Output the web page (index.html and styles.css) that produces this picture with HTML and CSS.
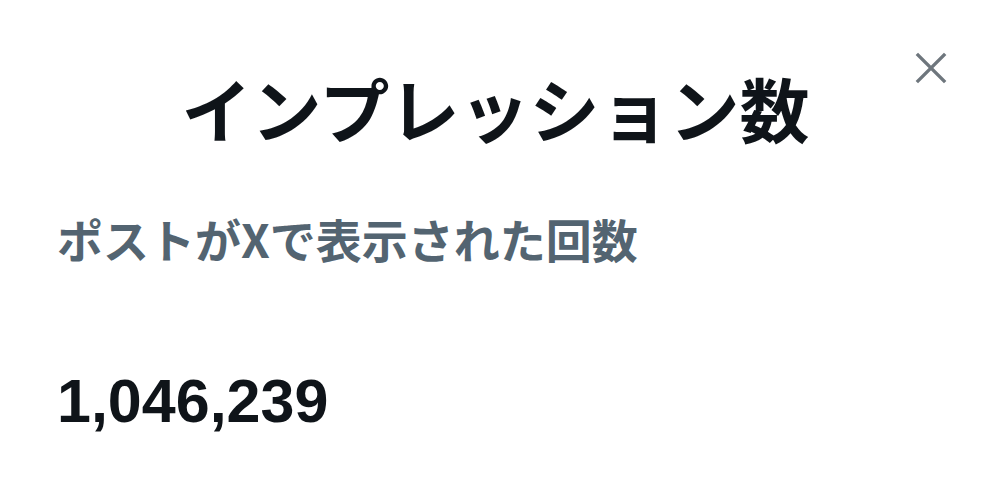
FILE: index.html
```html
<!DOCTYPE html>
<html lang="ja">
<head>
    <meta charset="UTF-8">
    <meta name="viewport" content="width=device-width, initial-scale=1.0">
    <title>インプレッション数</title>
    <link rel="stylesheet" href="styles.css">
</head>
<body>
    <div class="sheet">
        <header class="sheet_head">
            <h1 class="titulo">インプレッション数</h1>
            <button class="fechar" aria-label="閉じる">
                <svg viewBox="0 0 24 24" width="34" height="34">
                    <path d="M2 2 L22 22 M22 2 L2 22" stroke="#6e767d" stroke-width="2.4" fill="none"/>
                </svg>
            </button>
        </header>

        <p class="descricao">ポストがXで表示された回数</p>

        <p class="valor">1,046,239</p>
    </div>
</body>
</html>
```

FILE: styles.css
```css
* {
    margin: 0;
    padding: 0;
    box-sizing: border-box;
}
body{
    font-family: "Noto Sans CJK JP", "Noto Sans", sans-serif;
    background: #ffffff;
    color: #0f1419;
}
.sheet{
    width: 991px;
    height: 496px;
    padding: 0 57px;
    display: flex;
    flex-direction: column;
}
.sheet_head{
    position: relative;
    display: flex;
    justify-content: center;
    padding-top: 60px;
}
.titulo{
    font-size: 70px;
    font-weight: 700;
    line-height: 96px;
    letter-spacing: 0;
}
.fechar{
    position: absolute;
    top: 51px;
    right: -14px;
    width: 34px;
    height: 34px;
    border: none;
    background: none;
    display: flex;
}
.descricao{
    margin-top: 52px;
    font-size: 46px;
    font-weight: 700;
    line-height: 60px;
    color: #536471;
}
.valor{
    margin-top: 98px;
    font-family: "Liberation Sans", Arial, sans-serif;
    font-size: 61px;
    font-weight: 700;
    line-height: 70px;
}
```
